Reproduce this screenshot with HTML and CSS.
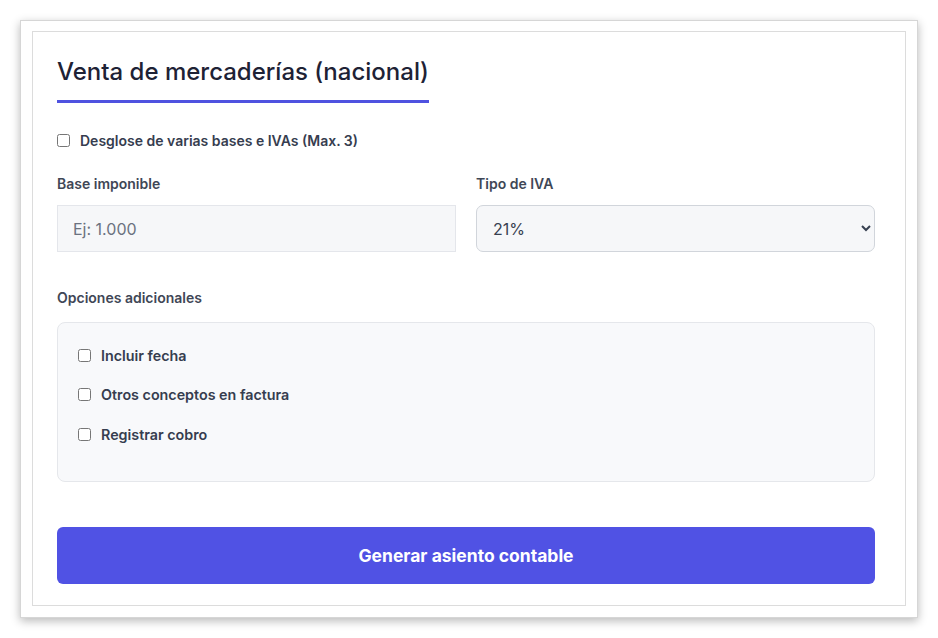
FILE: index.html
```html
<!DOCTYPE html>
<html lang="es">
<head>
  <meta charset="utf-8">
  <title>Venta de mercaderías</title>
  <link rel="stylesheet" href="styles.css">
</head>
<body>
  <div class="frame">
    <div class="card">
      <h2 class="card-title">Venta de mercaderías (nacional)</h2>

      <label class="check-row">
        <input type="checkbox" id="desglose">
        <span>Desglose de varias bases e IVAs (Max. 3)</span>
      </label>

      <div class="fields">
        <div class="field">
          <label class="field-label" for="base">Base imponible</label>
          <input type="text" id="base" class="text-input" placeholder="Ej: 1.000">
        </div>
        <div class="field">
          <label class="field-label" for="iva">Tipo de IVA</label>
          <select id="iva" class="select-input">
            <option>21%</option>
            <option>10%</option>
            <option>4%</option>
            <option>0%</option>
          </select>
        </div>
      </div>

      <div class="field-label section-label">Opciones adicionales</div>
      <div class="options-box">
        <label class="check-row option">
          <input type="checkbox" id="fecha">
          <span>Incluir fecha</span>
        </label>
        <label class="check-row option">
          <input type="checkbox" id="otros">
          <span>Otros conceptos en factura</span>
        </label>
        <label class="check-row option">
          <input type="checkbox" id="cobro">
          <span>Registrar cobro</span>
        </label>
      </div>

      <button class="submit-btn" type="button">Generar asiento contable</button>
    </div>
  </div>
</body>
</html>
```

FILE: styles.css
```css
body {
  margin: 0;
  padding: 20px;
  background-color: white;
  font-family: Inter, "Open Sans", sans-serif;
}

.frame {
  border: 1px solid #d6d6d6;
  padding: 10px 11px 11px 11px;
  background-color: white;
  box-shadow: 0 3px 9px rgba(0, 0, 0, 0.28);
}

.card {
  border: 1px solid #dcdcdc;
  padding: 24px 30px 21px 24px;
  background-color: white;
}

.card-title {
  display: inline-block;
  margin: 0 0 27px 0;
  padding-bottom: 13px;
  border-bottom: 3px solid #4f52e0;
  font-size: 24px;
  line-height: 31px;
  font-weight: 500;
  color: #1e2235;
}

.check-row {
  display: flex;
  align-items: center;
  gap: 10px;
  height: 20px;
  font-size: 14px;
  font-weight: 600;
  color: #363d4f;
  cursor: pointer;
}

.check-row input {
  margin: 0;
  width: 13px;
  height: 13px;
}

.fields {
  display: grid;
  grid-template-columns: 1fr 1fr;
  gap: 20px;
  margin-top: 24px;
}

.field {
  display: flex;
  flex-direction: column;
}

.field-label {
  display: block;
  font-size: 14px;
  line-height: 20px;
  font-weight: 600;
  color: #3f4756;
  margin-bottom: 11px;
}

.text-input,
.select-input {
  box-sizing: border-box;
  height: 47px;
  width: 100%;
  margin: 0;
  background-color: #f6f7f9;
  font-family: inherit;
  font-size: 16px;
}

.text-input {
  border: 1px solid #e4e6eb;
  border-radius: 0;
  padding: 0 15px;
  color: #374151;
}

.text-input::placeholder {
  color: #6b7280;
}

.select-input {
  border: 1px solid #d1d5db;
  border-radius: 7px;
  padding: 0 12px;
  color: #374151;
}

.section-label {
  margin-top: 36px;
  margin-bottom: 14px;
}

.options-box {
  background-color: #f8f9fb;
  border: 1px solid #e5e7eb;
  border-radius: 8px;
  padding: 22px 20px 17px 20px;
}

.options-box .option {
  margin-bottom: 19.5px;
  font-size: 14.3px;
}

.submit-btn {
  display: block;
  width: 100%;
  height: 57px;
  margin-top: 45px;
  border: none;
  border-radius: 6px;
  background-color: #5052e4;
  color: white;
  font-family: inherit;
  font-size: 17.5px;
  font-weight: 700;
  cursor: pointer;
}
```
